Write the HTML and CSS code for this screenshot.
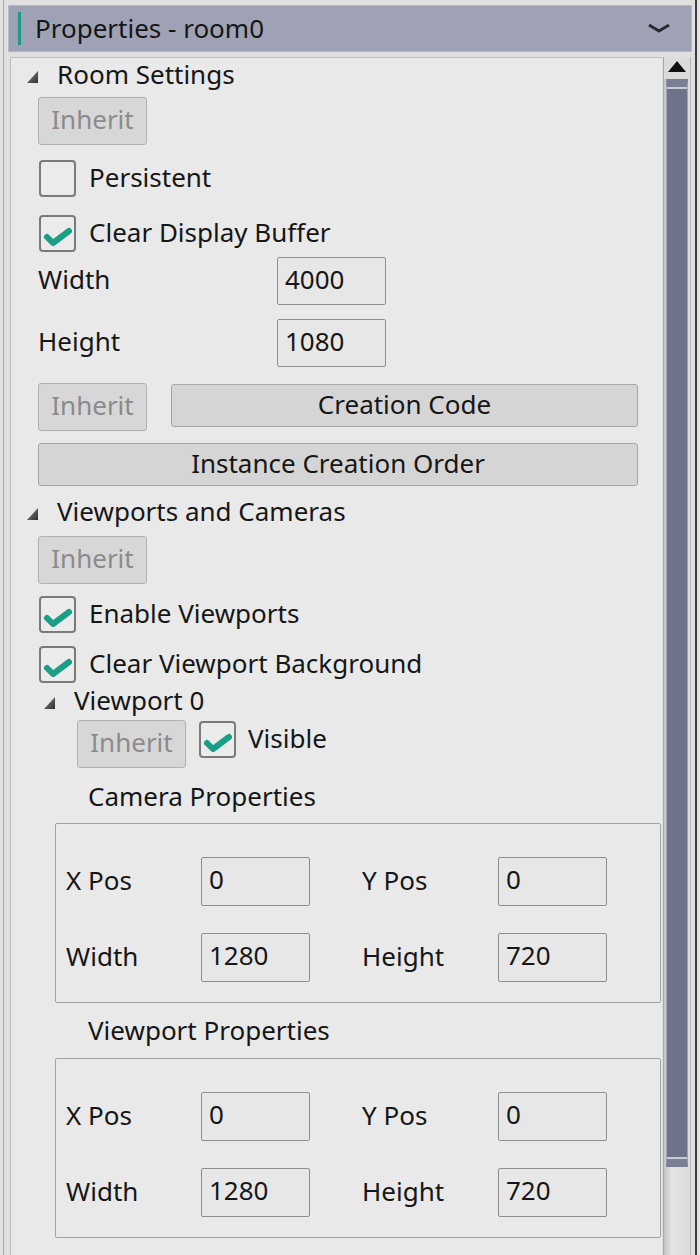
FILE: index.html
```html
<!DOCTYPE html>
<html lang="en">
<head>
    <meta charset="UTF-8">
    <title>Properties - room0</title>
    <link rel="stylesheet" href="styles.css">
</head>
<body>
    <div class="dock">
        <!-- title bar -->
        <div class="dock-header">
            <span class="accent"></span>
            <span class="dock-title">Properties - room0</span>
            <svg class="chevron" width="24" height="10" viewBox="0 0 24 10">
                <path d="M2 2 L12 8 L22 2" fill="none" stroke="#2a2a33" stroke-width="3" stroke-linejoin="round"/>
            </svg>
        </div>

        <div class="dock-body">
            <div class="props">
                <!-- Room Settings -->
                <div class="section">
                    <svg class="expander" width="11" height="12" viewBox="0 0 11 12"><polygon points="11,0 11,12 0,12" fill="url(#tri)"/></svg>
                    <span class="txt">Room Settings</span>
                </div>
                <button class="btn inherit first">Inherit</button>

                <label class="check-row persistent">
                    <span class="box"></span>
                    <span class="txt">Persistent</span>
                </label>
                <label class="check-row clear-buffer">
                    <span class="box on">
                        <svg width="37" height="37" viewBox="0 0 37 37"><path d="M8 22 L14 28 L30 16" fill="none" stroke="#1a9e86" stroke-width="6" stroke-linecap="round" stroke-linejoin="round"/></svg>
                    </span>
                    <span class="txt">Clear Display Buffer</span>
                </label>

                <div class="field-row room-width">
                    <span class="field-label">Width</span>
                    <span class="input">4000</span>
                </div>
                <div class="field-row room-height">
                    <span class="field-label">Height</span>
                    <span class="input">1080</span>
                </div>

                <div class="btn-row code-row">
                    <button class="btn inherit">Inherit</button>
                    <button class="btn wide">Creation Code</button>
                </div>
                <button class="btn full">Instance Creation Order</button>

                <!-- Viewports and Cameras -->
                <div class="section views">
                    <svg class="expander" width="11" height="12" viewBox="0 0 11 12"><polygon points="11,0 11,12 0,12" fill="url(#tri)"/></svg>
                    <span class="txt">Viewports and Cameras</span>
                </div>
                <button class="btn inherit second">Inherit</button>

                <label class="check-row enable-views">
                    <span class="box on">
                        <svg width="37" height="37" viewBox="0 0 37 37"><path d="M8 22 L14 28 L30 16" fill="none" stroke="#1a9e86" stroke-width="6" stroke-linecap="round" stroke-linejoin="round"/></svg>
                    </span>
                    <span class="txt">Enable Viewports</span>
                </label>
                <label class="check-row clear-views">
                    <span class="box on">
                        <svg width="37" height="37" viewBox="0 0 37 37"><path d="M8 22 L14 28 L30 16" fill="none" stroke="#1a9e86" stroke-width="6" stroke-linecap="round" stroke-linejoin="round"/></svg>
                    </span>
                    <span class="txt">Clear Viewport Background</span>
                </label>

                <!-- Viewport 0 -->
                <div class="subsection">
                    <svg class="expander" width="11" height="12" viewBox="0 0 11 12"><polygon points="11,0 11,12 0,12" fill="url(#tri)"/></svg>
                    <span class="txt">Viewport 0</span>
                </div>
                <div class="btn-row visible-row">
                    <button class="btn inherit">Inherit</button>
                    <label class="check-row inline">
                        <span class="box on">
                            <svg width="37" height="37" viewBox="0 0 37 37"><path d="M8 22 L14 28 L30 16" fill="none" stroke="#1a9e86" stroke-width="6" stroke-linecap="round" stroke-linejoin="round"/></svg>
                        </span>
                        <span class="txt">Visible</span>
                    </label>
                </div>

                <div class="group-title">Camera Properties</div>
                <div class="group">
                    <span class="field-label">X Pos</span>
                    <span class="input">0</span>
                    <span class="field-label">Y Pos</span>
                    <span class="input">0</span>
                    <span class="field-label">Width</span>
                    <span class="input">1280</span>
                    <span class="field-label">Height</span>
                    <span class="input">720</span>
                </div>

                <div class="group-title port">Viewport Properties</div>
                <div class="group port">
                    <span class="field-label">X Pos</span>
                    <span class="input">0</span>
                    <span class="field-label">Y Pos</span>
                    <span class="input">0</span>
                    <span class="field-label">Width</span>
                    <span class="input">1280</span>
                    <span class="field-label">Height</span>
                    <span class="input">720</span>
                </div>
            </div>

            <!-- scrollbar -->
            <div class="scrollbar">
                <div class="scroll-up">
                    <svg width="18" height="11" viewBox="0 0 18 11"><polygon points="9,0 18,11 0,11" fill="#111"/></svg>
                </div>
                <div class="thumb"></div>
                <div class="track"></div>
            </div>
        </div>
    </div>

    <!-- shared gradient for the tree expanders -->
    <svg width="0" height="0" class="defs">
        <defs>
            <linearGradient id="tri" x1="0" y1="0" x2="1" y2="1">
                <stop offset="0" stop-color="#8a8a8a"/>
                <stop offset="1" stop-color="#2e2e2e"/>
            </linearGradient>
        </defs>
    </svg>
</body>
</html>
```

FILE: styles.css
```css
/* base */
body {
    margin: 0;
    background: #e2e2e2;
    font-family: "Noto Sans", "Open Sans", sans-serif;
    font-size: 26px;
    color: #161616;
    overflow: hidden;
}

.defs {
    display: block;
}

.dock {
    box-sizing: border-box;
    width: 694px;
    height: 1255px;
    margin-left: 3px;
    padding: 5px 3px 0 4px;
    border-left: 1px solid #a9a9a9;
    border-right: 2px solid #3c3c3c;
    background: #e0e0e0;
}

/* title bar */
.dock-header {
    box-sizing: border-box;
    height: 47px;
    display: flex;
    align-items: center;
    background: #9ea2b4;
    border: 1px solid #b3b6c4;
}

.accent {
    width: 3px;
    height: 33px;
    margin-left: 9px;
    background: #1e9a85;
}

.dock-title {
    margin-left: 14px;
    line-height: 32px;
    margin-bottom: 2px;
}

.chevron {
    margin-left: auto;
    margin-right: 20px;
    margin-top: -2px;
}

.dock-body {
    display: flex;
    margin-top: 5px;
    height: 1200px;
}

/* property list */
.props {
    box-sizing: border-box;
    width: 652px;
    margin-left: 2px;
    padding: 0 24px 0 27px;
    background: #e9e9e9;
    border: 1px solid #bdbdbd;
    border-right: none;
    display: flex;
    flex-direction: column;
    align-items: flex-start;
}

.txt {
    line-height: 32px;
    margin-bottom: 4px;
}

.section {
    display: flex;
    align-items: center;
    gap: 19px;
    height: 35px;
    margin-left: -11px;
}

.section.views {
    margin-top: 9px;
}

.subsection {
    display: flex;
    align-items: center;
    gap: 19px;
    height: 32px;
    margin-top: 3px;
    margin-left: 6px;
}

.expander {
    margin-top: 2px;
}

/* buttons */
.btn {
    box-sizing: border-box;
    height: 43px;
    font: inherit;
    color: #161616;
    background: #d5d5d5;
    border: 1px solid #a6a6a6;
    border-radius: 3px;
    padding: 0 0 4px;
    line-height: 34px;
}

.btn.inherit {
    width: 109px;
    height: 48px;
    color: #8b8b8b;
    background: #d7d7d7;
    border-color: #b0b0b0;
}

.btn.first {
    margin-top: 4px;
}

.btn.second {
    margin-top: 6px;
}

.btn.full {
    width: 100%;
    margin-top: 12px;
}

.btn-row {
    display: flex;
    align-items: flex-start;
    width: 100%;
}

.code-row {
    margin-top: 16px;
    gap: 24px;
}

.btn.wide {
    flex: 1;
    margin-top: 1px;
}

.visible-row {
    margin-top: 2px;
    margin-left: 39px;
    gap: 13px;
}

/* checkboxes */
.check-row {
    display: flex;
    align-items: center;
    gap: 13px;
    height: 37px;
    margin-left: 1px;
}

.check-row.inline {
    margin-top: 1px;
    margin-left: 0;
    gap: 12px;
}

.box {
    box-sizing: border-box;
    width: 37px;
    height: 37px;
    border: 2px solid #7a7a7a;
    border-radius: 4px;
    background: #ebebeb;
    position: relative;
}

.box svg {
    position: absolute;
    left: -2px;
    top: -2px;
}

.persistent { margin-top: 15px; }
.clear-buffer { margin-top: 18px; }
.enable-views { margin-top: 12px; }
.clear-views { margin-top: 13px; }

/* fields */
.field-row {
    display: flex;
    align-items: center;
    height: 48px;
}

.field-row .field-label {
    width: 239px;
}

.room-width { margin-top: 5px; }
.room-height { margin-top: 14px; }

.input {
    box-sizing: border-box;
    width: 109px;
    height: 48px;
    padding-left: 7px;
    border: 1px solid #8e8e8e;
    border-radius: 2px;
    background: #e7e7e7;
    line-height: 42px;
}

.field-label {
    line-height: 32px;
    margin-bottom: 4px;
}

/* group boxes */
.group-title {
    height: 32px;
    margin-top: 14px;
    margin-left: 50px;
    line-height: 28px;
}

.group-title.port {
    margin-top: 13px;
}

.group {
    box-sizing: border-box;
    align-self: stretch;
    height: 180px;
    margin: 9px -23px 0 17px;
    padding: 33px 0 0 10px;
    border: 1px solid #a3a3a3;
    border-radius: 2px;
    display: grid;
    grid-template-columns: 135px 161px 136px 109px;
    grid-auto-rows: 49px;
    row-gap: 27px;
    align-items: center;
}

.group .input {
    height: 49px;
}

.group.port {
    margin-top: 10px;
}

/* scrollbar */
.scrollbar {
    box-sizing: border-box;
    width: 28px;
    margin-left: 1px;
    display: flex;
    flex-direction: column;
    border-left: 1px solid #a8a8a8;
    border-right: 1px solid #b9b9b9;
    background: linear-gradient(to right, #c4c4c4, #e4e4e4 30%, #dadada);
}

.scroll-up {
    height: 22px;
    display: flex;
    justify-content: center;
    padding-top: 4px;
    box-sizing: border-box;
    background: #dcdcdc;
}

.thumb {
    box-sizing: border-box;
    height: 1088px;
    margin: 0 2px;
    background: #6f7389;
    border: 1px solid #9fa3b3;
    border-top: 8px solid #7b7f94;
    border-bottom: 8px solid #7b7f94;
    box-shadow: inset 0 2px 0 #c9ccd6, inset 0 -2px 0 #c9ccd6;
}

.track {
    flex: 1;
}
```
